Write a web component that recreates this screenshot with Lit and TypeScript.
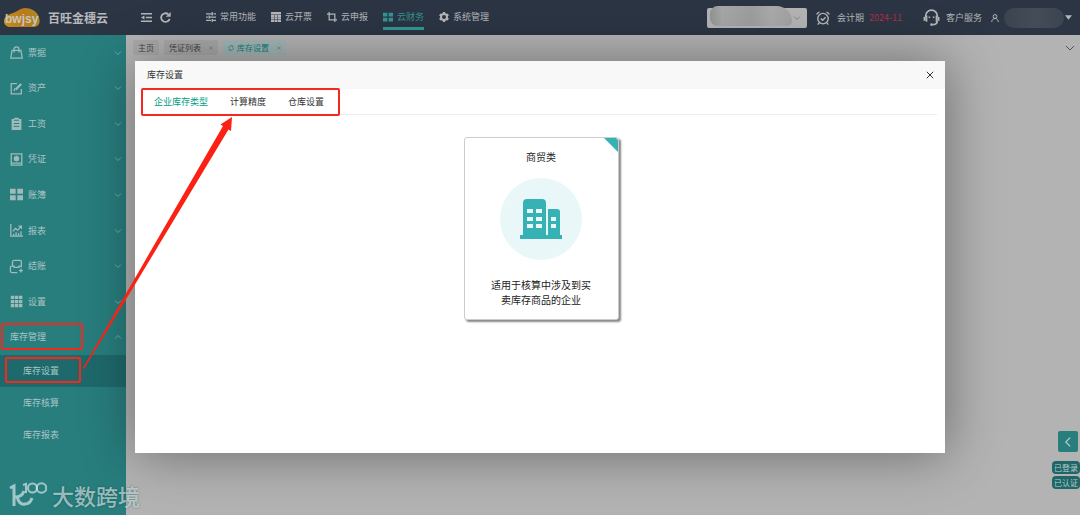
import { LitElement, html, css, svg, nothing } from "lit";
import { customElement, property, state } from "lit/decorators.js";
import { classMap } from "lit/directives/class-map.js";

const icons: Record<string, unknown> = {
  outdent: svg`<path stroke-width="2" d="M0 2.500h16M7 8h9M0 13.500h16"/><path fill="currentColor" stroke="none" d="M5 5v6L0 8z"/>`,
  reload: svg`<path stroke-width="2.600" d="M14 10A6.300 6.300 0 1 1 12 3.300"/><path fill="currentColor" stroke="none" d="M15.500 0v7H8.500z"/>`,
  sliders: svg`<path stroke-width="2" d="M0 3h9M12 3h4M10 0v5.500M0 8h3M6 8h10M5 5.500v5M0 13.500h8M11 13.500h5M10 11v5"/>`,
  table: svg`<path fill="currentColor" stroke="none" d="M0 0h16v4H0zM0 4.600h4.800v3.200H0zM5.600 4.600h4.800v3.200H5.600zM11.200 4.600H16v3.200h-4.800zM0 8.500h4.800v3.200H0zM5.600 8.500h4.800v3.200H5.600zM11.200 8.500H16v3.200h-4.800zM0 12.400h4.800V16H0zM5.600 12.400h4.800V16H5.600zM11.200 12.400H16V16h-4.800z"/>`,
  crop: svg`<path stroke-width="2" d="M3.500 0v12.500H16M0 3.500h12.500V16"/>`,
  four: svg`<path fill="currentColor" stroke="none" d="M0 1h7v6H0zM9 1h7v6H9zM0 9h7v6H0zM9 9h7v6H9z"/>`,
  nine: svg`<path fill="currentColor" stroke="none" d="M1 1h4.200v4H1zM6 1h4.200v4H6zM11 1h4.200v4H11zM1 6h4.200v4H1zM6 6h4.200v4H6zM11 6h4.200v4H11zM1 11h4.200v4H1zM6 11h4.200v4H6zM11 11h4.200v4H11z"/>`,
  gear: svg`<circle cx="8" cy="8" r="4.800" stroke-width="3.200"/><path stroke-width="3.600" d="M8 0v3M8 13v3M1.100 4l2.600 1.500M12.300 10.500l2.600 1.500M14.900 4l-2.600 1.500M3.700 10.500L1.100 12"/>`,
  alarm: svg`<circle cx="8" cy="8.700" r="6"/><path d="M5.300 8.500l2.200 2.200 3.500-3.500M.7 4A6 6 0 0 1 4 1.200M12 1.200A6 6 0 0 1 15.300 4M3.500 13.500L2 15.500M12.500 13.500l1.500 2"/>`,
  headset: svg`<path d="M2.500 7.500V6.500a5.500 5.500 0 0 1 11 0v1M13.500 11c0 2.500-2 3.700-4.500 3.700"/><path stroke-width="2" d="M1.500 7.500v3.500M14.500 7.500v3.500"/><path d="M3.300 6v6M12.700 6v6"/><circle cx="8" cy="14.700" r="1.300" fill="currentColor" stroke="none"/><path stroke-width="1.500" d="M6 7v1.500M10 7v1.500"/>`,
  person: svg`<circle cx="8" cy="5" r="3.800" stroke-width="2"/><path stroke-width="2" d="M1.500 16c0-4 2.500-7 6.500-7s6.500 3 6.500 7"/>`,
  caret: svg`<path fill="currentColor" stroke="none" d="M0 3h16l-8 10z"/>`,
  down: svg`<path stroke-width="2" d="M0 4l8 8 8-8"/>`,
  up: svg`<path stroke-width="2" d="M0 12l8-8 8 8"/>`,
  left: svg`<path stroke-width="2" d="M11.500 1l-7 7 7 7"/>`,
  close: svg`<path stroke-width="2" d="M1.500 1.500l13 13M14.500 1.500l-13 13"/>`,
  bag: svg`<path d="M2.500 5.500h11l1.500 9.500H1zM5 8V4a3 3 0 0 1 6 0v4"/>`,
  edit: svg`<path d="M8.500 2H1.500v12.500h12.500V8.500M5 11l1-3.200"/><path stroke-width="2.800" d="M7 9.200l6.800-6.800"/>`,
  clipboard: svg`<path fill="currentColor" stroke="none" d="M2 2.500h3V1h6v1.500h3V16H2z"/><path class="cut" d="M5 4h6M4.500 8h7M4.500 11.500h7"/>`,
  voucher: svg`<path d="M1.500 1h13v14h-13zM1.500 12.500h13"/><circle cx="8" cy="6.800" r="2.400" fill="currentColor"/><path stroke-width="1" d="M8 3v7.600M4.200 6.800h7.600M5.300 4.100l5.400 5.400M10.700 4.100L5.300 9.500"/>`,
  chart: svg`<path d="M1 0v15h15M3.500 9l3-3.500 3 2L13.500 3M10.500 2.500h3.500V6M4.500 15v-3M7.500 15v-5M10.500 15v-4M13.500 15v-6"/>`,
  closing: svg`<path d="M3 7V2.500a2 2 0 0 1 2-2h7.500a1.500 1.500 0 0 1 1.500 1.500V7.500H11V9H5V7.500H2a1.500 1.500 0 0 0-1.500 1.500v4.500a2 2 0 0 0 2 2H9M14 7v2M13.500 10.500v5M11 13h5"/>`,
  sync: svg`<path d="M2 9.500A6 6 0 0 1 12.500 4M14 6.500A6 6 0 0 1 3.500 12M12.800 1v3.500H9.300M3.200 15v-3.500h3.500"/>`,
};

@customElement("app-icon")
export class AppIcon extends LitElement {
  static styles = css`
    :host { display: inline-flex; flex: none; width: 10px; height: 10px; }
    svg { width: 100%; height: 100%; fill: none; stroke: currentColor; stroke-width: 1.6; overflow: visible; }
    .cut { stroke: #287d7d; stroke-width: 1.2; }
  `;
  @property() name = "";
  render() {
    return html`<svg viewBox="0 0 16 16" aria-hidden="true">${icons[this.name] ?? nothing}</svg>`;
  }
}

@customElement("top-bar")
export class TopBar extends LitElement {
  static styles = css`
    :host { display: block; }
    .bar { display: flex; align-items: center; height: 35px; padding: 0 8px 0 4px; background: #2b3543; color: #b4b6b9; font-size: 9px; line-height: 14px; }
    .logo { width: 36px; height: 20px; flex: none; }
    .logo text { font: 700 12px "Liberation Sans", sans-serif; fill: #c9c6bb; }
    .brand { margin: 0 0 0 8px; width: 93px; font-size: 12px; font-weight: 700; line-height: 16px; color: #b7b9bc; white-space: nowrap; }
    button { display: flex; border: 0; padding: 0; background: none; color: inherit; font: inherit; align-items: center; }
    .tools { display: flex; gap: 8px; width: 65px; }
    .tools app-icon { width: 11px; height: 11px; }
    nav { display: flex; gap: 15px; align-self: stretch; flex: 1; }
    .link { display: flex; align-items: center; gap: 4px; box-sizing: border-box; height: 30px; padding-top: 6px; border-bottom: 3px solid transparent; color: inherit; text-decoration: none; white-space: nowrap; }
    .link.on { color: #329597; border-color: #329597; }
    .right { display: flex; align-items: center; white-space: nowrap; }
    .company { display: grid; width: 100px; height: 20px; margin-right: 9px; }
    .company > * { grid-area: 1 / 1; }
    select { appearance: none; width: 100%; height: 20px; border: 0; border-radius: 2px; background: #b3b3b3; }
    .veil { margin: -2px 15px 2px 3px; border-radius: 10px 20px 6px 10px; background: linear-gradient(90deg, #929394, #a6a6a6 15%, #9c9d9d 50%, #a9a9a9 75%, #a1a1a2); pointer-events: none; }
    .company app-icon { justify-self: end; align-self: center; width: 6px; height: 6px; margin-right: 7px; color: #777; pointer-events: none; }
    .alarm { width: 14px; height: 14px; margin-right: 7px; }
    .date { width: 54px; margin-left: 5px; color: #b22c48; }
    .headset { width: 17px; height: 17px; margin-right: 6px; }
    .person { width: 8px; height: 8px; margin: 0 5px 0 9px; }
    .user { width: 60px; height: 20px; border-radius: 10px; background: linear-gradient(90deg, #3a434f, #444c57 50%, #3b4551); }
    .caret { width: 7px; height: 7px; margin-left: 1px; }
  `;
  private links = [
    ["sliders", "常用功能"],
    ["table", "云开票"],
    ["crop", "云申报"],
    ["four", "云财务"],
    ["gear", "系统管理"],
  ];
  render() {
    return html`<header class="bar">
      <svg class="logo" viewBox="0 0 36 20" role="img" aria-label="bwjsy">
        <defs><linearGradient id="g"><stop stop-color="#c49019" /><stop offset=".55" stop-color="#b9791e" /><stop offset="1" stop-color="#ac8a25" /></linearGradient></defs>
        <path fill="url(#g)" d="M0 13C0 9 3 7 9 5c4-1 7-5 12-5 6 0 11 3 13 7 3 6 2 12-5 12H7c-4 0-7-2-7-6z" />
        <text x="1" y="15">bwjsy</text>
      </svg>
      <h1 class="brand">百旺金穗云</h1>
      <div class="tools">
        <button aria-label="收起菜单"><app-icon name="outdent"></app-icon></button>
        <button aria-label="刷新"><app-icon name="reload"></app-icon></button>
      </div>
      <nav>
        ${this.links.map(([icon, label]) => html`<a href="#" class=${classMap({ link: true, on: label === "云财务" })}><app-icon name=${icon}></app-icon>${label}</a>`)}
      </nav>
      <div class="right">
        <div class="company">
          <select aria-label="企业"></select>
          <span class="veil"></span>
          <app-icon name="down"></app-icon>
        </div>
        <app-icon class="alarm" name="alarm"></app-icon><span>会计期</span><span class="date">2024-11</span>
        <app-icon class="headset" name="headset"></app-icon><span>客户服务</span>
        <app-icon class="person" name="person"></app-icon><span class="user"></span>
        <app-icon class="caret" name="caret"></app-icon>
      </div>
    </header>`;
  }
}

@customElement("side-menu")
export class SideMenu extends LitElement {
  static styles = css`
    :host { display: block; background: #287d7d; color: #a9c5c5; font-size: 9px; line-height: 14px; }
    .groups { display: grid; grid-template-rows: repeat(9, 1fr); height: 320px; }
    button, a { display: flex; align-items: center; box-sizing: border-box; width: 100%; border: 0; background: none; color: inherit; font: inherit; text-decoration: none; text-align: left; }
    button { padding: 0 5px 0 10px; }
    .icon { width: 13px; height: 13px; margin-right: 5px; color: #9fbaba; }
    .label { flex: 1; }
    .arrow { width: 6px; height: 6px; color: #8ab8b8; }
    a { height: 32px; padding-left: 23px; }
    .on { background: #1e696b; }
  `;
  private groups = [
    ["bag", "票据"],
    ["edit", "资产"],
    ["clipboard", "工资"],
    ["voucher", "凭证"],
    ["four", "账簿"],
    ["chart", "报表"],
    ["closing", "结账"],
    ["nine", "设置"],
    ["", "库存管理"],
  ];
  render() {
    return html`<nav>
      <div class="groups">
        ${this.groups.map(([icon, label]) => html`<button aria-expanded=${icon ? "false" : "true"}>
          ${icon ? html`<app-icon class="icon" name=${icon}></app-icon>` : nothing}
          <span class="label">${label}</span>
          <app-icon class="arrow" name=${icon ? "down" : "up"}></app-icon>
        </button>`)}
      </div>
      <a class="on" href="#">库存设置</a>
      <a href="#">库存核算</a>
      <a href="#">库存报表</a>
    </nav>`;
  }
}

@customElement("stock-dialog")
export class StockDialog extends LitElement {
  static styles = css`
    :host { display: block; background: #fff; box-shadow: 1px 1px 50px rgba(0, 0, 0, 0.4); color: #333; font-size: 9px; line-height: 14px; }
    button { border: 0; padding: 0; background: none; color: inherit; font: inherit; }
    .head { display: flex; align-items: center; justify-content: space-between; height: 28px; padding: 0 11px 0 12px; background: #f8f8f8; }
    h2 { margin: 0; font-size: 9px; font-weight: 400; }
    .close { display: flex; }
    .close app-icon { width: 8px; height: 8px; }
    .tabs { display: flex; gap: 22px; height: 25px; margin: 0 8px; padding: 0 11px; border-bottom: 1px solid #eee; }
    .tabs .on { color: #009e86; }
    .body { display: flex; justify-content: center; padding: 22px 0 133px 2px; }
    .card { position: relative; display: flex; flex-direction: column; align-items: center; box-sizing: border-box; width: 155px; height: 183px; padding-top: 11px; border: 1px solid #ccc; border-radius: 3px; background: #fff; box-shadow: 2px 2px 2px #888; color: #222; font-size: 10px; line-height: 16px; }
    .corner { position: absolute; top: 0; right: 0; width: 14px; height: 14px; fill: #36b1b4; }
    .disc { display: grid; place-items: center; width: 82px; height: 82px; margin: 13px 0 17px; border-radius: 50%; background: #eaf7f9; }
    .disc svg { width: 42px; height: 40px; }
    .note { width: 104px; line-height: 15px; text-align: center; }
  `;
  @state() private tab = 0;
  render() {
    return html`<div class="head">
        <h2>库存设置</h2>
        <button class="close" aria-label="关闭"><app-icon name="close"></app-icon></button>
      </div>
      <div class="tabs" role="tablist">
        ${["企业库存类型", "计算精度", "仓库设置"].map((t, i) => html`<button role="tab" aria-selected=${i === this.tab} class=${classMap({ on: i === this.tab })} @click=${() => (this.tab = i)}>${t}</button>`)}
      </div>
      <div class="body">
        <button class="card">
          <svg class="corner" viewBox="0 0 14 14" aria-hidden="true"><path d="M0 0h12l2 2v12z" /></svg>
          <span>商贸类</span>
          <span class="disc">
            <svg viewBox="0 0 42 40" aria-hidden="true">
              <path fill="#36b1b4" d="M3 36V4q0-4 4-4h15q4 0 4 4v32h2V10h9q3 0 3 3v23h2v4H0v-4z" />
              <path fill="#eaf7f9" d="M7 10h6v4H7zM16 10h6v4h-6zM7 18h6v4H7zM16 18h6v4h-6zM7 25h6v4H7zM16 25h6v4h-6zM31 18h5v4h-5zM31 25h5v4h-5z" />
            </svg>
          </span>
          <span class="note">适用于核算中涉及到买卖库存商品的企业</span>
        </button>
      </div>`;
  }
}

@customElement("app-root")
export class AppRoot extends LitElement {
  static styles = css`
    :host { display: block; position: relative; min-height: 100vh; overflow: hidden; font-family: "Noto Sans CJK SC", sans-serif; background: #b3b3b3; }
    .page { display: grid; grid-template: 35px 1fr / 126px 1fr; min-height: 100vh; }
    top-bar { grid-column: 1 / -1; }
    .open { display: flex; align-items: flex-start; gap: 5px; padding: 5px 6px 0 7px; font-size: 8px; line-height: 14px; color: #444; }
    .tab { display: flex; align-items: center; gap: 8px; height: 15px; padding: 0 5px; border-radius: 2px; background: #a9a9a9; }
    .tab app-icon { width: 4px; height: 4px; color: #666; }
    .tab.on { background: #a3b7b7; color: #147f7c; gap: 3px; }
    .tab.on .sync { width: 6px; height: 6px; color: #147f7c; }
    .tab.on .x { margin-left: 5px; }
    .more { width: 8px; height: 8px; margin: 4px 0 0 auto; color: #555; }
    .dialog { position: absolute; top: 61px; left: 12.5%; width: 75%; }
    .float { position: absolute; right: 0; top: 431px; display: grid; justify-items: end; color: #b2cccc; }
    .back { display: grid; place-items: center; width: 20px; height: 21px; margin: 0 2px 9px 0; padding: 0; border: 0; border-radius: 2px; background: #287d7d; color: inherit; }
    .badge { height: 13px; margin-bottom: 2px; padding: 0 2px; border-radius: 4px; background: #1f6667; font-size: 8px; line-height: 13px; }
    .marks { position: absolute; top: 0; left: 0; width: 340px; height: 390px; pointer-events: none; fill: none; stroke: #f5281e; stroke-width: 2; }
    .marks .arrow { fill: #fb2114; stroke: none; }
    .watermark { position: absolute; left: 9px; bottom: 5px; display: flex; align-items: center; gap: 5px; font-size: 22px; line-height: 30px; font-weight: 500; color: rgba(213, 230, 231, 0.7); text-shadow: 0 0 2px rgba(0, 50, 50, 0.5); }
    .watermark svg { width: 38px; height: 26px; fill: none; stroke: currentColor; }
  `;
  render() {
    return html`<div class="page">
        <top-bar></top-bar>
        <side-menu></side-menu>
        <main class="open">
          <span class="tab">主页</span>
          <span class="tab">凭证列表<app-icon name="close"></app-icon></span>
          <span class="tab on"><app-icon class="sync" name="sync"></app-icon>库存设置<app-icon class="x" name="close"></app-icon></span>
          <app-icon class="more" name="down"></app-icon>
        </main>
      </div>
      <div class="float">
        <button class="back" aria-label="展开"><app-icon name="left"></app-icon></button>
        <span class="badge">已登录</span>
        <span class="badge">已认证</span>
      </div>
      <stock-dialog class="dialog" role="dialog" aria-label="库存设置"></stock-dialog>
      <svg class="marks" viewBox="0 0 340 390" aria-hidden="true">
        <rect x="2" y="324" width="80" height="25" rx="1" />
        <rect x="6" y="358" width="74" height="24" rx="1" />
        <rect x="142" y="89" width="197" height="26" rx="1" />
        <path class="arrow" d="M83 368L223 126 220.500 124.500 232 117 231 131 228.500 129.500 84 369z" />
      </svg>
      <div class="watermark">
        <svg viewBox="0 0 38 26" aria-hidden="true">
          <path stroke-width="3" d="M1 6l4-2v20M6 15q7 0 9-6M8 14c1 6 4 9 8 8 4 0 6-3 7-6" />
          <path stroke-width="2" d="M14 3l3-1v9" />
          <circle cx="23.500" cy="6" r="4.500" stroke-width="2" />
          <circle cx="32.500" cy="6" r="4.800" stroke-width="2" />
        </svg>
        <span>大数跨境</span>
      </div>`;
  }
}
